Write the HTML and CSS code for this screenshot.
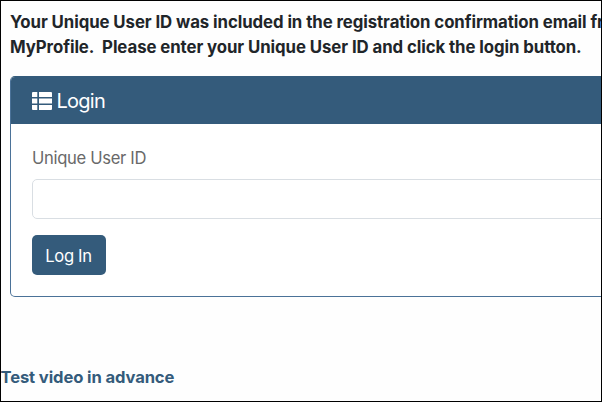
FILE: index.html
```html
<!DOCTYPE html>
<html lang="en">
<head>
<meta charset="utf-8">
<title>Login</title>
<link rel="stylesheet" href="styles.css">
</head>
<body>
<main class="page">
  <p class="intro"><span class="intro-first">Your Unique User ID was included in the registration confirmation email from</span><br><span class="intro-second">MyProfile.&nbsp; Please enter your Unique User ID and click the login button.</span></p>
  <section class="card">
    <h1 class="card-header">
      <svg class="icon" viewBox="0 0 20 18" aria-hidden="true"><path d="M1 0H5.3V5H0V1Q0 0 1 0ZM7 0H19Q20 0 20 1V5H7ZM0 6.6H5.3V11.4H0ZM7 6.6H20V11.4H7ZM0 13H5.3V18H1Q0 18 0 17ZM7 13H20V17Q20 18 19 18H7Z"/></svg>
      <span>Login</span>
    </h1>
    <form class="card-body">
      <label class="label" for="uid">Unique User ID</label>
      <input class="input" id="uid" type="text">
      <button class="button" type="button">Log In</button>
    </form>
  </section>
  <a class="link">Test video in advance</a>
</main>
</body>
</html>
```
FILE: styles.css
```css
* { box-sizing: border-box; }
body { margin: 0; font-family: Inter, "Liberation Sans", sans-serif; font-size: 16.6px; color: #212529; }
.page { width: 602px; height: 402px; border: 1px solid #000; background: #fefefe; overflow: hidden; }
.intro { margin: 9px 0 0 9px; height: 50px; font-size: 16.8px; font-weight: 700; line-height: 25px; white-space: nowrap; letter-spacing: -0.075px; }
.card { width: 700px; height: 221px; margin: 16px 0 0 9px; border: 1px solid #4b7298; border-top-color: #345b7b; border-radius: 5px; background: #fff; overflow: hidden; }
.card-header { display: flex; align-items: center; gap: 5px; height: 47px; margin: 0; padding-left: 20.5px; background: #345b7b; color: #fff; font-size: 20px; font-weight: 400; letter-spacing: -0.75px; }
.icon { width: 20px; height: 18px; fill: currentColor; }
.card-body { display: flex; flex-direction: column; align-items: flex-start; padding: 22px 21px; }
.label { line-height: 25px; color: #696969; letter-spacing: -0.32px; }
.input { width: 656px; height: 40px; margin: 8px 0 16px; border: 1px solid #d9dee3; border-radius: 5px; background: #fff; }
.button { width: 74px; height: 40px; padding: 1px 1px 0 0; border: 0; border-radius: 5px; background: #345b7b; color: #fff; font: inherit; letter-spacing: -0.35px; }
.link { display: block; margin: 68px 0 0 -0.5px; line-height: 25px; font-weight: 700; color: #345b7b; letter-spacing: -0.12px; white-space: nowrap; }
```
